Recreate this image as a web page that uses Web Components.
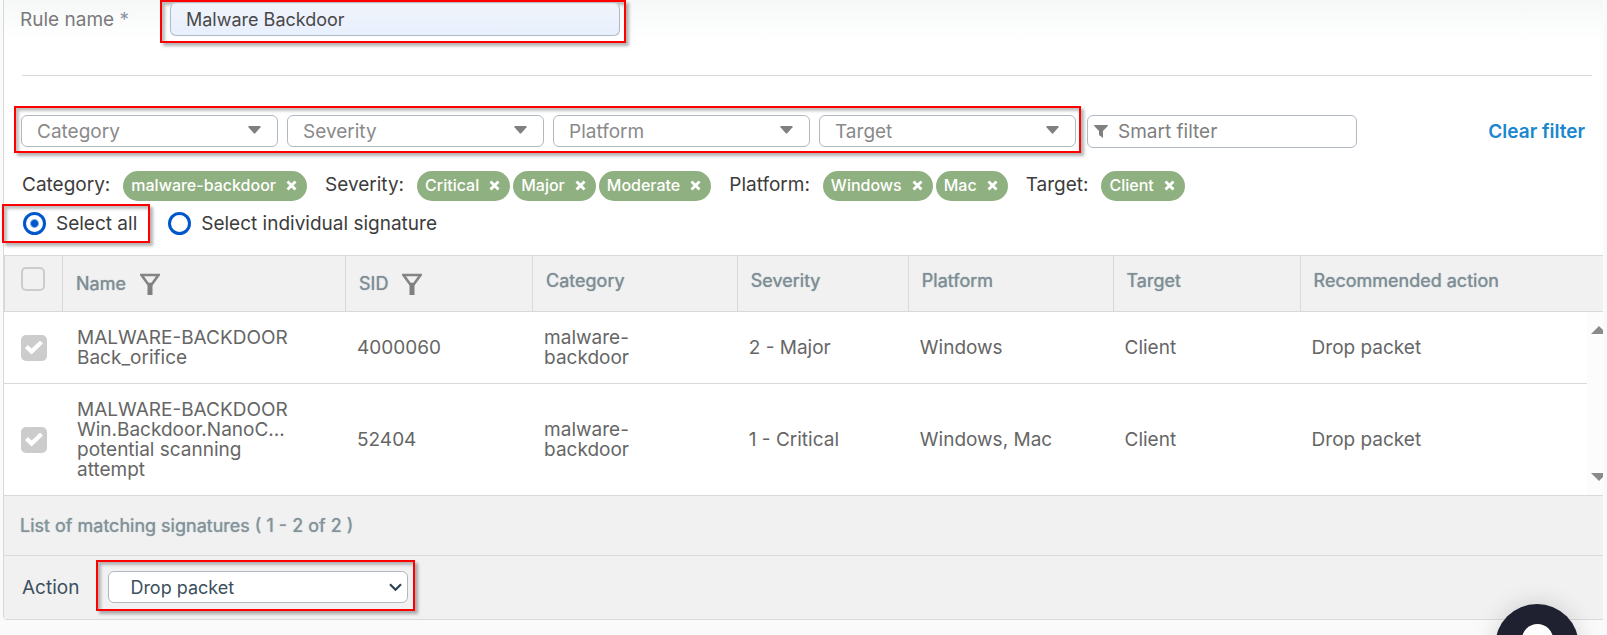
<!DOCTYPE html>
<html lang="en">
<head>
<meta charset="utf-8">
<title>Signature rule</title>
<style>
  body { margin: 0; background: #fafafa; font-family: Inter, "Liberation Sans", sans-serif; font-size: 19px; color: #3c3c3c; }
</style>
</head>
<body>
<rule-page></rule-page>

<script>
const define = (name, html, init) => {
  const template = document.createElement('template');
  template.innerHTML = html;
  customElements.define(name, class extends HTMLElement {
    constructor() {
      super();
      this.attachShadow({ mode: 'open' }).append(template.content.cloneNode(true));
    }
    connectedCallback() { if (init) init(this, this.shadowRoot); }
  });
};

/* Red annotation frame round a control */
define('focus-frame', `
  <style>
    :host { display: flex; box-sizing: border-box; flex: none; border: 2px solid #f00; padding: var(--frame-padding, 4px);
      box-shadow: 3px 3px 3px rgba(0,0,0,.3), inset 3px 3px 3px rgba(0,0,0,.25); }
  </style>
  <slot></slot>`);

/* Filter drop-down */
define('filter-select', `
  <style>
    :host { display: block; position: relative; width: 257px; height: 32px; }
    select { appearance: none; box-sizing: border-box; width: 100%; height: 32px; margin: 0; padding: 0 32px 0 15px;
      border: 1px solid #b1b8c0; border-radius: 6px; background: #fff; color: #8a8a8a; font: inherit; }
    svg { position: absolute; right: 17px; top: 11px; pointer-events: none; }
  </style>
  <select><option></option></select>
  <svg width="13" height="8" viewBox="0 0 13 8"><path d="M1 0h11q1 .4.5 1.200L7.300 7.200q-.8.8-1.600 0L.5 1.200Q0 .4 1 0z" fill="#808080"/></svg>`,
  (host, root) => {
    const label = host.getAttribute('label');
    root.querySelector('select').setAttribute('aria-label', label);
    root.querySelector('option').textContent = label;
  });

/* Text filter with funnel */
define('smart-filter', `
  <style>
    :host { display: flex; align-items: baseline; box-sizing: border-box; width: 270px; height: 33px; padding-left: 6px;
      border: 1px solid #b1b8c0; border-radius: 6px; background: #fff; }
    svg { flex: none; }
    input { flex: 1; min-width: 0; height: 31px; box-sizing: border-box; border: 0; padding: 0 10px; background: none; font: inherit; outline: 0; color: #3c3c3c; }
    input::placeholder { color: #808080; opacity: 1; }
  </style>
  <svg width="14" height="13" viewBox="0 0 14 13"><path d="M.5 0h13q.7.3.3 1L9 6v7L5 10V6L.2 1Q-.2.3.5 0z" fill="#808080"/></svg>
  <input type="text" placeholder="Smart filter" aria-label="Smart filter">`);

/* Removable tag */
define('tag-chip', `
  <style>
    :host { display: inline-flex; align-items: baseline; gap: 10px; box-sizing: border-box; height: 30px; padding: 5px 10px 7px 8px;
      border-radius: 15px; background: #8fb080; color: #fff; font-size: 16px; font-weight: 500; line-height: 18px; white-space: nowrap; }
    button { display: block; width: 11px; height: 11px; padding: 0; border: 0; background: none; }
    svg { display: block; }
  </style>
  <span><slot></slot></span>
  <button aria-label="Remove"><svg width="11" height="11" viewBox="0 0 11 11"><path d="M1.500 1.500l8 8M9.500 1.500l-8 8" stroke="#fff" stroke-width="2.800"/></svg></button>`);

define('tag-group', `
  <style>
    :host { display: flex; align-items: baseline; gap: 3px; }
    .label { margin-right: 10px; }
  </style>
  <span class="label"></span><slot></slot>`,
  (host, root) => { root.querySelector('.label').textContent = host.getAttribute('label') + ':'; });

define('select-mode', `
  <style>
    :host { display: flex; align-items: center; gap: 18px; line-height: 23px; }
    label { display: flex; align-items: center; gap: 10px; }
    focus-frame { --frame-padding: 6px 11px 6px 19px; }
    input { appearance: none; box-sizing: border-box; width: 23px; height: 23px; margin: 0; border: 3px solid #0057cc; border-radius: 50%; background: #fff; }
    input:checked { background: radial-gradient(circle, #0057cc 0 3px, #fff 5px); }
  </style>
  <focus-frame><label><input type="radio" name="mode" checked>Select all</label></focus-frame>
  <label><input type="radio" name="mode">Select individual signature</label>`);

define('check-box', `
  <style>
    :host { display: block; }
    input { display: grid; place-items: center; appearance: none; box-sizing: border-box; width: 24px; height: 24px; margin: 0;
      border: 2px solid #ccc; border-radius: 5px; }
    input:checked { width: 26px; height: 26px; background: #ccc; }
    input:checked::before { content: ""; width: 18px; height: 14px; background: #fff;
      clip-path: polygon(0 55%, 15% 33%, 37% 58%, 84% 0, 100% 22%, 37% 100%); }
  </style>
  <input type="checkbox" disabled>`,
  (host, root) => {
    const box = root.querySelector('input');
    box.checked = host.hasAttribute('checked');
    box.setAttribute('aria-label', host.getAttribute('label'));
  });

define('funnel-button', `
  <style>
    :host { display: inline-block; }
    button, svg { display: block; }
    button { padding: 0; border: 0; background: none; }
  </style>
  <button aria-label="Filter column"><svg width="20" height="22" viewBox="0 0 20 22"><path d="M1.500 2h17L12 11H8z" fill="none" stroke="#858585" stroke-width="2.600"/><path d="M7.500 10h5v12h-5z" fill="#808080"/></svg></button>`);

define('signature-table', `
  <style>
    :host { display: block; position: relative; overflow: hidden; }
    table { width: 100%; table-layout: fixed; border-collapse: separate; border-spacing: 0; }
    th { box-sizing: border-box; height: 57px; padding: 14px 0 0 13px; vertical-align: top; text-align: left;
      background: #f1f1f1; border: 1px solid #d6dadd; border-width: 1px 0 1px 1px;
      color: #7f8e96; font-size: 18px; font-weight: 400; line-height: 22px; text-shadow: 0 0 1px #7f8e96; }
    th:first-child { padding: 11px 0 0 16px; }
    th.sortable { padding-top: 17px; }
    th div { display: flex; align-items: center; gap: 14px; }
    td { box-sizing: border-box; height: 72px; padding: 0 0 0 12px; border-bottom: 1px solid #d9d9d9; background: #fff;
      color: #666; line-height: 20px; vertical-align: middle; }
    td:first-child { padding-left: 17px; }
    td:nth-child(2) { padding-left: 15px; }
    tr:last-child td { height: 111px; border-bottom: 0; }
    .bar { position: absolute; right: 0; top: 57px; bottom: 0; width: 16px; box-sizing: border-box; padding: 14px 0 14px 4px;
      display: flex; flex-direction: column; justify-content: space-between; overflow: hidden; background: #fcfcfc; }
    .bar svg { flex: none; }
  </style>
  <table>
    <colgroup>
      <col style="width:58px"><col style="width:17.7%"><col style="width:11.7%"><col style="width:12.8%">
      <col style="width:10.7%"><col style="width:12.8%"><col style="width:11.7%"><col>
    </colgroup>
    <thead><tr>
      <th><check-box label="Select every signature"></check-box></th>
      <th class="sortable"><div>Name <funnel-button></funnel-button></div></th>
      <th class="sortable"><div>SID <funnel-button></funnel-button></div></th>
      <th>Category</th><th>Severity</th><th>Platform</th><th>Target</th><th>Recommended action</th>
    </tr></thead>
    <tbody>
      <tr><td><check-box checked label="Signature 4000060"></check-box></td>
        <td>MALWARE-BACKDOOR<br>Back_orifice</td><td>4000060</td><td>malware-<br>backdoor</td>
        <td>2 - Major</td><td>Windows</td><td>Client</td><td>Drop packet</td></tr>
      <tr><td><check-box checked label="Signature 52404"></check-box></td>
        <td>MALWARE-BACKDOOR<br>Win.Backdoor.NanoC...<br>potential scanning<br>attempt</td><td>52404</td><td>malware-<br>backdoor</td>
        <td>1 - Critical</td><td>Windows, Mac</td><td>Client</td><td>Drop packet</td></tr>
    </tbody>
  </table>
  <div class="bar">
    <svg width="16" height="8" viewBox="0 0 16 8"><path d="M8 0l8 8H0z" fill="#8a8a8a"/></svg>
    <svg width="16" height="8" viewBox="0 0 16 8"><path d="M0 0h16L8 8z" fill="#8a8a8a"/></svg>
  </div>`);

define('rule-name', `
  <style>
    :host { display: flex; align-items: baseline; padding-left: 16px; background: linear-gradient(#f6f8f8, #fff); }
    label { width: 140px; color: #7a7a7a; }
    label span { color: #8a96a2; }
    focus-frame { --frame-padding: 1px 4px 5px 8px; }
    input { box-sizing: border-box; width: 450px; height: 33px; padding: 0 15px; border: 1px solid #b1b8c8; border-top-color: #e3e7ee;
      border-radius: 6px; background: linear-gradient(#f0f3fa, #e8f0fe); color: #484848; font: inherit; font-size: 18px; }
  </style>
  <label for="name">Rule name <span>*</span></label>
  <focus-frame><input id="name" type="text" value="Malware Backdoor"></focus-frame>`);

define('action-bar', `
  <style>
    :host { display: flex; align-items: baseline; gap: 17px; box-sizing: border-box; height: 64px; padding: 4px 0 0 18px;
      border-top: 1px solid #d9d9d9; background: #f1f1f1; color: #3c4f5e; }
    focus-frame { --frame-padding: 9px 5px 6px 10px; }
    .field { position: relative; height: 32px; }
    select { appearance: none; box-sizing: border-box; width: 300px; height: 32px; margin: 0; padding: 0 32px 0 21px;
      border: 1px solid #b1b8c0; border-radius: 6px; background: #fff; color: inherit; font: inherit; font-size: 18px; }
    svg { position: absolute; right: 6px; top: 12px; pointer-events: none; }
  </style>
  <label for="action">Action</label>
  <focus-frame><div class="field">
    <select id="action"><option>Drop packet</option></select>
    <svg width="13" height="9" viewBox="0 0 13 9"><path d="M1 1.200l5.500 5.500L12 1.200" fill="none" stroke="#2c4151" stroke-width="2.200"/></svg>
  </div></focus-frame>`);

define('help-launcher', `
  <style>
    :host { display: block; position: fixed; right: 28px; bottom: -53px; }
    button { display: flex; justify-content: center; width: 84px; height: 84px; padding: 20px 0 0; border: 0; border-radius: 50%;
      background: #1f2030; box-shadow: 0 0 24px rgba(0,0,0,.15); }
    span { width: 31px; height: 31px; border-radius: 50%; background: #fff; }
  </style>
  <button aria-label="Help"><span></span></button>`);

define('rule-page', `
  <style>
    :host { display: block; }
    main { margin: 0 4px 0 3px; border: 1px solid #d9d9d9; border-width: 0 0 1px 1px; border-radius: 0 0 0 4px; background: #fff; }
    hr { margin: 32px 11px 30px 18px; border: 0; border-top: 1px solid #d9d9d9; }
    .filters { display: flex; align-items: baseline; gap: 6px; padding: 0 18px 0 10px; }
    .filters focus-frame { gap: 9px; --frame-padding: 7px 3px 4px 5px; }
    a { margin-left: auto; color: #1a87cf; font-weight: 600; text-decoration: none; }
    .tags { display: flex; flex-wrap: wrap; gap: 18px; padding: 18px 18px 3px; }
    select-mode { margin: 0 0 12px -2px; }
    .summary { box-sizing: border-box; height: 60px; padding-left: 16px; border-top: 1px solid #d9d9d9; background: #f1f1f1;
      color: #84939b; font-size: 18px; line-height: 59px; text-shadow: 0 0 1px #84939b; }
  </style>
  <main>
    <rule-name></rule-name>
    <hr>
    <div class="filters">
      <focus-frame>
        <filter-select label="Category"></filter-select><filter-select label="Severity"></filter-select>
        <filter-select label="Platform"></filter-select><filter-select label="Target"></filter-select>
      </focus-frame>
      <smart-filter></smart-filter>
      <a href="#">Clear filter</a>
    </div>
    <div class="tags">
      <tag-group label="Category"><tag-chip>malware-backdoor</tag-chip></tag-group>
      <tag-group label="Severity"><tag-chip>Critical</tag-chip><tag-chip>Major</tag-chip><tag-chip>Moderate</tag-chip></tag-group>
      <tag-group label="Platform"><tag-chip>Windows</tag-chip><tag-chip>Mac</tag-chip></tag-group>
      <tag-group label="Target"><tag-chip>Client</tag-chip></tag-group>
    </div>
    <select-mode></select-mode>
    <signature-table></signature-table>
    <div class="summary">List of matching signatures ( 1 - 2 of 2 )</div>
    <action-bar></action-bar>
  </main>
  <help-launcher></help-launcher>`);
</script>
</body>
</html>
